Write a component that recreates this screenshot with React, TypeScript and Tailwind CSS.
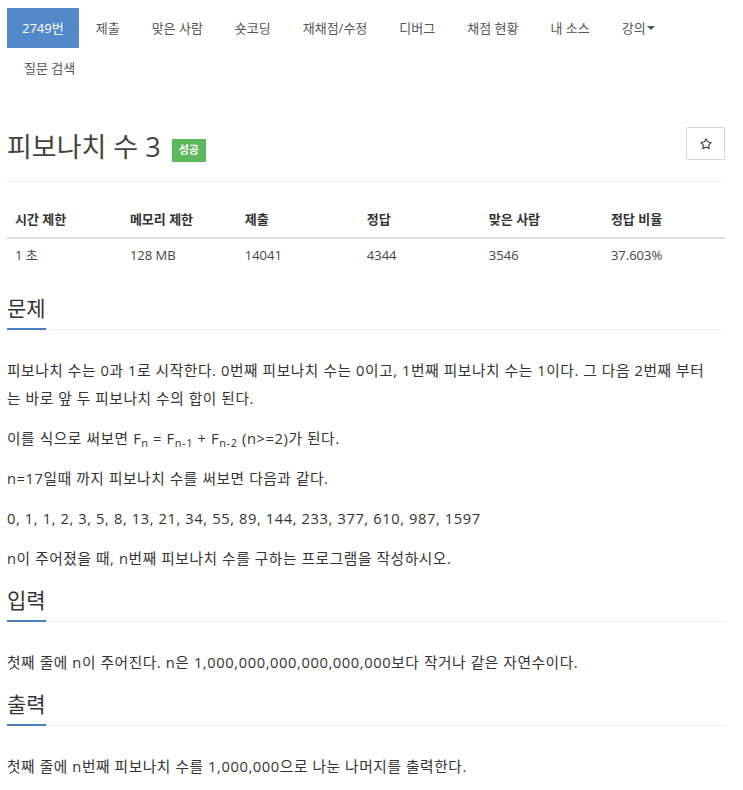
import { Star } from 'lucide-react';

const navItems = ['제출', '맞은 사람', '숏코딩', '재채점/수정', '디버그', '채점 현황', '내 소스'];

const Headline = ({ title }: { title: string }) => (
  <div className="border-b border-dotted border-[#e2e2e2]">
    <span className="-mb-px inline-block border-b-2 border-[#4a7fc0] pb-1 text-[21px] leading-[32px] text-[#333]">
      {title}
    </span>
  </div>
);

export default function App() {
  return (
    <div
      className="min-h-screen bg-white pl-[7px] pr-[18px] text-[#333]"
      style={{ fontFamily: '"Open Sans", "Noto Sans CJK KR", sans-serif' }}
    >
      {/* problem menu */}
      <ul className="mt-[8px] flex flex-wrap text-[13px] leading-[20px]">
        <li>
          <a className="block bg-[#5289c8] px-[15px] py-[10px] text-white">2749번</a>
        </li>
        {navItems.map((item) => (
          <li key={item} className="ml-[2px]">
            <a className="block px-[15px] py-[10px] text-[#555]">{item}</a>
          </li>
        ))}
        <li className="ml-[2px]">
          <a className="flex items-center px-[15px] py-[10px] text-[#555]">
            강의
            <span className="ml-[1px] inline-block h-0 w-0 border-x-[4px] border-t-[4px] border-x-transparent border-t-[#555]" />
          </a>
        </li>
        <li className="ml-[2px]">
          <a className="block px-[15px] py-[10px] text-[#555]">질문 검색</a>
        </li>
      </ul>

      {/* title */}
      <div className="mt-[39px] flex items-start justify-between border-b border-[#eee] pb-[14px]">
        <div className="flex h-[40px] items-center">
          <h1 className="text-[27px] leading-[40px] text-[#444]">피보나치 수 3</h1>
          <span className="ml-[11px] mt-[6px] inline-flex h-[23px] items-center bg-[#5cb85c] px-[7px] text-[11px] font-bold text-white">
            성공
          </span>
        </div>
        <button className="flex h-[33px] w-[39px] items-center justify-center rounded-[2px] border border-[#d6d6d6] bg-white">
          <Star size={12} strokeWidth={2.2} className="text-[#333]" />
        </button>
      </div>

      {/* info table */}
      <table className="mb-[19px] mt-[19px] w-full table-fixed border-collapse text-left">
        <thead>
          <tr className="border-b-2 border-[#ddd] text-[13px] font-bold leading-[20px]">
            <th className="w-[16%] px-[8px] py-[8px]">시간 제한</th>
            <th className="w-[16%] px-[8px] py-[8px]">메모리 제한</th>
            <th className="w-[17%] px-[8px] py-[8px]">제출</th>
            <th className="w-[17%] px-[8px] py-[8px]">정답</th>
            <th className="w-[17%] px-[8px] py-[8px]">맞은 사람</th>
            <th className="w-[17%] px-[8px] py-[8px]">정답 비율</th>
          </tr>
        </thead>
        <tbody>
          <tr className="text-[13px] leading-[20px] text-[#444]">
            <td className="px-[8px] pb-[8px] pt-[6px]">1 초</td>
            <td className="px-[8px] pb-[8px] pt-[6px]">128 MB</td>
            <td className="px-[8px] pb-[8px] pt-[6px]">14041</td>
            <td className="px-[8px] pb-[8px] pt-[6px]">4344</td>
            <td className="px-[8px] pb-[8px] pt-[6px]">3546</td>
            <td className="px-[8px] pb-[8px] pt-[6px]">37.603%</td>
          </tr>
        </tbody>
      </table>

      <section>
        <Headline title="문제" />
        <div className="mt-[26px] text-[14.7px] leading-[28px] tracking-[0.6px] text-[#333]">
          <p className="mb-[12px]">
            피보나치 수는 0과 1로 시작한다. 0번째 피보나치 수는 0이고, 1번째 피보나치 수는 1이다. 그 다음 2번째 부터
            <br />는 바로 앞 두 피보나치 수의 합이 된다.
          </p>
          <p className="mb-[12px]">
            이를 식으로 써보면 F<sub className="text-[0.75em]">n</sub> = F<sub className="text-[0.75em]">n-1</sub> + F
            <sub className="text-[0.75em]">n-2</sub> (n&gt;=2)가 된다.
          </p>
          <p className="mb-[12px]">n=17일때 까지 피보나치 수를 써보면 다음과 같다.</p>
          <p className="mb-[12px]">0, 1, 1, 2, 3, 5, 8, 13, 21, 34, 55, 89, 144, 233, 377, 610, 987, 1597</p>
          <p className="mb-[12px]">n이 주어졌을 때, n번째 피보나치 수를 구하는 프로그램을 작성하시오.</p>
        </div>
      </section>

      <section>
        <Headline title="입력" />
        <div className="mt-[26px] text-[14.7px] leading-[28px] tracking-[0.6px] text-[#333]">
          <p className="mb-[12px]">첫째 줄에 n이 주어진다. n은 1,000,000,000,000,000,000보다 작거나 같은 자연수이다.</p>
        </div>
      </section>

      <section>
        <Headline title="출력" />
        <div className="mt-[26px] text-[14.7px] leading-[28px] tracking-[0.6px] text-[#333]">
          <p className="mb-[12px]">첫째 줄에 n번째 피보나치 수를 1,000,000으로 나눈 나머지를 출력한다.</p>
        </div>
      </section>
    </div>
  );
}
